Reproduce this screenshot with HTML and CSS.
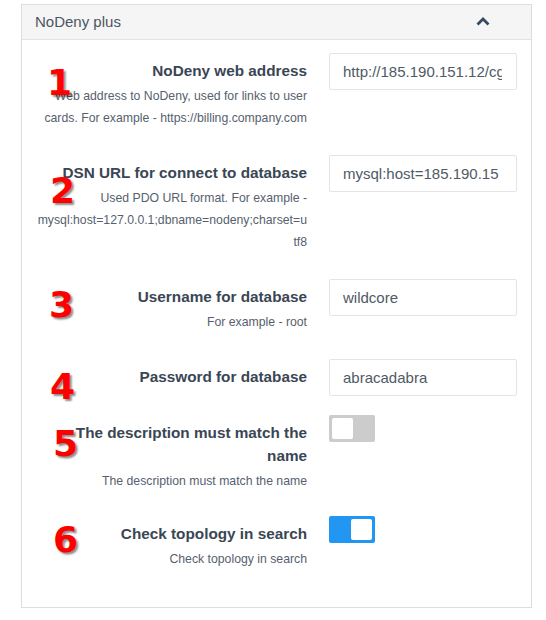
FILE: index.html
```html
<!DOCTYPE html>
<html>
<head>
<meta charset="utf-8">
<link rel="stylesheet" href="styles.css">
</head>
<body>
<div class="page">
  <div class="panel">
    <div class="panel-heading">
      <span class="panel-title">NoDeny plus</span>
      <svg class="chevron" width="14" height="9" viewBox="0 0 14 9"><polyline points="1.5,7.5 7,2 12.5,7.5" fill="none" stroke="#34495e" stroke-width="2.8"/></svg>
    </div>
    <div class="panel-body">
      <div class="row">
        <span class="mark n1">1</span>
        <div class="label-col">
          <div class="title">NoDeny web address</div>
          <div class="desc">Web address to NoDeny, used for links to user cards. For example - https://billing.company.com</div>
        </div>
        <input class="field" type="text" value="http://185.190.151.12/cgi-bin/stat.pl">
      </div>
      <div class="row">
        <span class="mark n2">2</span>
        <div class="label-col">
          <div class="title">DSN URL for connect to database</div>
          <div class="desc">Used PDO URL format. For example - mysql:host=127.0.0.1;dbname=nodeny;charset=utf8</div>
        </div>
        <input class="field" type="text" value="mysql:host=185.190.15 1.12;dbname=nodeny">
      </div>
      <div class="row">
        <span class="mark n3">3</span>
        <div class="label-col">
          <div class="title">Username for database</div>
          <div class="desc">For example - root</div>
        </div>
        <input class="field" type="text" value="wildcore">
      </div>
      <div class="row">
        <span class="mark n4">4</span>
        <div class="label-col">
          <div class="title">Password for database</div>
        </div>
        <input class="field" type="text" value="abracadabra">
      </div>
      <div class="row">
        <span class="mark n5">5</span>
        <div class="label-col">
          <div class="title">The description must match the name</div>
          <div class="desc">The description must match the name</div>
        </div>
        <div><span class="toggle"><span class="knob"></span></span></div>
      </div>
      <div class="row row-last">
        <span class="mark n6">6</span>
        <div class="label-col">
          <div class="title">Check topology in search</div>
          <div class="desc">Check topology in search</div>
        </div>
        <div><span class="toggle on"><span class="knob"></span></span></div>
      </div>
    </div>
  </div>
</div>
</body>
</html>
```
FILE: styles.css
```css
html, body {
  margin: 0;
  padding: 0;
  background: #ffffff;
}

.page {
  padding: 4px 15px 0 21px;
  font-family: "Liberation Sans", Arial, sans-serif;
}

.panel {
  width: 511px;
  box-sizing: border-box;
  border: 1px solid #dddddd;
  background: #ffffff;
}

.panel-heading {
  height: 35px;
  box-sizing: border-box;
  border-bottom: 1px solid #e2e2e2;
  background: #f5f5f5;
  display: flex;
  align-items: center;
  justify-content: space-between;
  padding: 0 41px 2px 13px;
}

.panel-title {
  font-size: 15px;
  color: #4b5663;
}

.chevron {
  display: block;
}

.panel-body {
  padding: 13px 14px 7px 15px;
  display: flex;
  flex-direction: column;
}

.row {
  position: relative;
  display: grid;
  grid-template-columns: 1fr 188px;
  column-gap: 22px;
  margin-bottom: 19px;
}

.row-last {
  margin-top: -2px;
  margin-bottom: 23px;
}

.label-col {
  padding-top: 6px;
  text-align: right;
}

.title {
  font-size: 15.3px;
  font-weight: bold;
  line-height: 23px;
  color: #3a4654;
}

.desc {
  font-size: 12.25px;
  line-height: 22px;
  color: #56616e;
  overflow-wrap: anywhere;
  margin-top: 3px;
  margin-bottom: 7px;
}

.field {
  display: block;
  width: 188px;
  height: 37px;
  box-sizing: border-box;
  border: 1px solid #e4e4e4;
  border-radius: 2px;
  padding: 0 14px 0 13px;
  font-family: "Liberation Sans", Arial, sans-serif;
  font-size: 15px;
  color: #4f5a66;
  background: #ffffff;
  outline: none;
}

.toggle {
  display: block;
  width: 46px;
  height: 27px;
  box-sizing: border-box;
  border-radius: 2px;
  background: #cccccc;
  padding: 3px;
}

.toggle .knob {
  display: block;
  width: 21px;
  height: 21px;
  border-radius: 2px;
  background: #ffffff;
}

.toggle.on {
  background: #2196f3;
}

.toggle.on .knob {
  margin-left: 19px;
}

.mark {
  position: absolute;
  font-family: "DejaVu Sans", sans-serif;
  font-weight: bold;
  font-size: 36px;
  line-height: 36px;
  color: #ff0000;
  text-shadow: 2px 2px 2px rgba(0, 0, 0, 0.45);
  z-index: 2;
}

.n1 { left: 10px; top: 12px; }
.n2 { left: 13px; top: 18px; }
.n3 { left: 12px; top: 8px; }
.n4 { left: 13px; top: 10px; }
.n5 { left: 16px; top: 11px; }
.n6 { left: 16px; top: 6px; }
```
